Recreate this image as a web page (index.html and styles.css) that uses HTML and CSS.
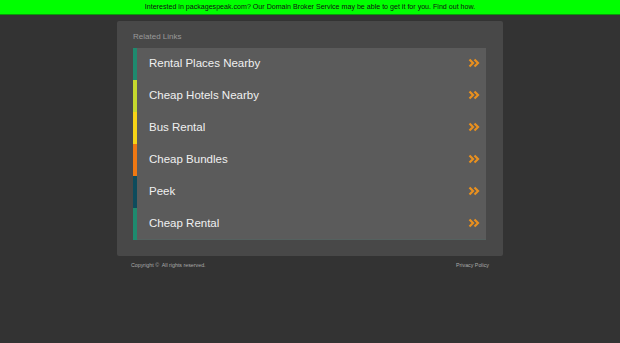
FILE: index.html
```html
<!DOCTYPE html>
<html lang="en">
  <head>
    <meta charset="utf-8">
    <title>packagespeak.com</title>
    <link rel="stylesheet" href="styles.css">
  </head>
  <body>
    <div class="topbar">
      <a href="#">Interested in packagespeak.com? Our Domain Broker Service may be able to get it for you. Find out how.</a>
    </div>

    <div class="wrap">
      <div class="panel">
        <div class="panel-title">Related Links</div>
        <ul class="links">
          <li class="c1"><a href="#"><span>Rental Places Nearby</span><svg class="arrow" viewBox="0 0 12 10"><path d="M1.5 1.5 L5 5 L1.5 8.5 M6.5 1.5 L10 5 L6.5 8.5" /></svg></a></li>
          <li class="c2"><a href="#"><span>Cheap Hotels Nearby</span><svg class="arrow" viewBox="0 0 12 10"><path d="M1.5 1.5 L5 5 L1.5 8.5 M6.5 1.5 L10 5 L6.5 8.5" /></svg></a></li>
          <li class="c3"><a href="#"><span>Bus Rental</span><svg class="arrow" viewBox="0 0 12 10"><path d="M1.5 1.5 L5 5 L1.5 8.5 M6.5 1.5 L10 5 L6.5 8.5" /></svg></a></li>
          <li class="c4"><a href="#"><span>Cheap Bundles</span><svg class="arrow" viewBox="0 0 12 10"><path d="M1.5 1.5 L5 5 L1.5 8.5 M6.5 1.5 L10 5 L6.5 8.5" /></svg></a></li>
          <li class="c5"><a href="#"><span>Peek</span><svg class="arrow" viewBox="0 0 12 10"><path d="M1.5 1.5 L5 5 L1.5 8.5 M6.5 1.5 L10 5 L6.5 8.5" /></svg></a></li>
          <li class="c1"><a href="#"><span>Cheap Rental</span><svg class="arrow" viewBox="0 0 12 10"><path d="M1.5 1.5 L5 5 L1.5 8.5 M6.5 1.5 L10 5 L6.5 8.5" /></svg></a></li>
        </ul>
      </div>
      <div class="footer">
        <span>Copyright &copy;&nbsp; All rights reserved.</span>
        <a href="#">Privacy Policy</a>
      </div>
    </div>
  </body>
</html>
```

FILE: styles.css
```css
body {
  margin: 0;
  background: #333333;
  font-family: "Liberation Sans", Arial, sans-serif;
}
a {
  text-decoration: none;
}
.topbar {
  height: 14px;
  background: #00ff00;
  border-bottom: 1px solid #0a9a0a;
  text-align: center;
  font-size: 7.1px;
  line-height: 14px;
}
.topbar a {
  color: #111;
}
.wrap {
  width: 386px;
  margin: 6px auto 0;
}
.panel {
  background: #484848;
  border-radius: 2px;
  padding: 10px 17px 16px 16px;
}
.panel-title {
  font-size: 8px;
  color: #9a9a9a;
  height: 17px;
  line-height: 12px;
}
.links {
  list-style: none;
  margin: 0;
  padding: 0;
  background: #5b5b5b;
  box-shadow: inset 0 -1px 0 #55615f;
}
.links li {
  border-left: 4px solid #1e8a6e;
}
.links a {
  display: flex;
  align-items: center;
  justify-content: space-between;
  height: 30px;
  padding: 0 6px 2px 12px;
  color: #f0f0f0;
  font-size: 11.5px;
}
.arrow {
  width: 12px;
  height: 10px;
  fill: none;
  stroke: #e8901f;
  stroke-width: 2.2;
}
.c1 { border-left-color: #1e8a6e !important; }
.c2 { border-left-color: #c6d92e !important; }
.c3 { border-left-color: #f7d417 !important; }
.c4 { border-left-color: #f07812 !important; }
.c5 { border-left-color: #0e4b5c !important; }
.footer {
  display: flex;
  justify-content: space-between;
  padding: 6px 14px 0 14px;
  font-size: 5.3px;
  color: #aaaaaa;
}
.footer a {
  color: #aaaaaa;
}
```
